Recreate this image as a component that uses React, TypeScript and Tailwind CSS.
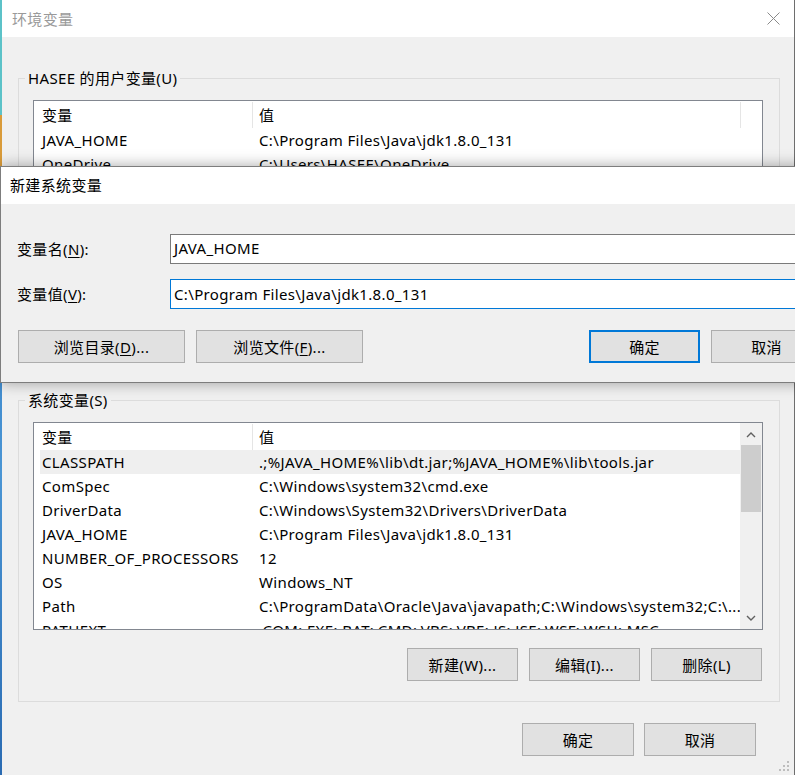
import React from "react";

type Row = [string, string];

const userRows: Row[] = [
  ["JAVA_HOME", "C:\\Program Files\\Java\\jdk1.8.0_131"],
  ["OneDrive", "C:\\Users\\HASEE\\OneDrive"],
  ["Path", "C:\\Users\\HASEE\\AppData\\Local\\Microsoft\\WindowsApps;"],
  ["TEMP", "%USERPROFILE%\\AppData\\Local\\Temp"],
  ["TMP", "%USERPROFILE%\\AppData\\Local\\Temp"],
];

const sysRows: Row[] = [
  ["CLASSPATH", ".;%JAVA_HOME%\\lib\\dt.jar;%JAVA_HOME%\\lib\\tools.jar"],
  ["ComSpec", "C:\\Windows\\system32\\cmd.exe"],
  ["DriverData", "C:\\Windows\\System32\\Drivers\\DriverData"],
  ["JAVA_HOME", "C:\\Program Files\\Java\\jdk1.8.0_131"],
  ["NUMBER_OF_PROCESSORS", "12"],
  ["OS", "Windows_NT"],
  ["Path", "C:\\ProgramData\\Oracle\\Java\\javapath;C:\\Windows\\system32;C:\\..."],
  ["PATHEXT", ".COM;.EXE;.BAT;.CMD;.VBS;.VBE;.JS;.JSE;.WSF;.WSH;.MSC"],
];

function Chevron({ down }: { down?: boolean }) {
  return (
    <svg width="10" height="6" viewBox="0 0 10 6" className="block">
      <path
        d={down ? "M1 1 L5 5 L9 1" : "M1 5 L5 1 L9 5"}
        fill="none"
        stroke="#606060"
        strokeWidth="1.4"
      />
    </svg>
  );
}

function Scrollbar() {
  return (
    <div className="w-[22px] shrink-0 bg-[#f0f0f0] flex flex-col">
      <div className="h-[22px] shrink-0 flex items-center justify-center pt-[2px]">
        <Chevron />
      </div>
      <div className="mx-[1px] h-[67px] shrink-0 bg-[#cdcdcd]" />
      <div className="flex-1" />
      <div className="h-[22px] shrink-0 flex items-center justify-center">
        <Chevron down />
      </div>
    </div>
  );
}

function ListBox({ rows, scroll, selected }: { rows: Row[]; scroll?: boolean; selected?: number }) {
  return (
    <div className="h-[208px] border border-[#828790] bg-white flex overflow-hidden">
      <div className="flex-1 min-w-0 flex flex-col pl-[6px] overflow-hidden">
        <div className="h-[27px] shrink-0 flex items-stretch">
          <div className="w-[212px] shrink-0 pl-[2px] flex items-center">变量</div>
          <div className="w-px shrink-0 mt-[1px] bg-[#e5e5e5]" />
          <div className="w-[487px] shrink-0 pl-[6px] flex items-center">值</div>
          {!scroll && <div className="w-px shrink-0 mt-[1px] bg-[#e5e5e5]" />}
        </div>
        {rows.map((r, i) => (
          <div
            key={i}
            className={
              "h-[24px] w-[700px] shrink-0 flex items-center whitespace-nowrap " +
              (i === selected ? "bg-[#efefef]" : "")
            }
          >
            <div className="w-[212px] shrink-0 pl-[2px] overflow-hidden">{r[0]}</div>
            <div className="w-[488px] shrink-0 pl-[7px] overflow-hidden">{r[1]}</div>
          </div>
        ))}
      </div>
      {scroll && <Scrollbar />}
    </div>
  );
}

function Btn({ children, className }: { children: React.ReactNode; className: string }) {
  return (
    <div
      className={
        "h-[33px] shrink-0 flex items-center justify-center bg-[#e1e1e1] text-black " + className
      }
    >
      {children}
    </div>
  );
}

export default function App() {
  return (
    <div className="relative w-[795px] h-[775px] overflow-hidden flex bg-[#f0f0f0] text-[15px] leading-[20px] tracking-[0.35px] text-black font-['Noto_Sans','Noto_Sans_CJK_SC',sans-serif]">
      {/* desktop strip */}
      <div className="w-[2px] shrink-0 flex flex-col">
        <div className="h-[115px] bg-[#5cc2c8]" />
        <div className="h-[55px] bg-[#d99b3a]" />
        <div className="flex-1 bg-gradient-to-b from-[#2f79c2] via-[#4a95d4] to-[#2a6bb2]" />
      </div>

      {/* main window */}
      <div className="relative flex-1 flex flex-col border-r border-[#6e6e6e]">
        <div className="h-[37px] shrink-0 bg-white flex items-center justify-between pl-[10px] pr-[14px]">
          <span className="text-[#9a9a9a]">环境变量</span>
          <svg width="13" height="13" viewBox="0 0 13 13">
            <path d="M0.5 0.5 L12.5 12.5 M12.5 0.5 L0.5 12.5" stroke="#8a8a8a" strokeWidth="1" />
          </svg>
        </div>

        <div className="flex-1 flex flex-col pl-[16px] pr-[14px]">
          <fieldset className="mt-[31px] border border-[#dcdcdc]">
            <legend className="ml-[6px] px-[3px] leading-[20px]">HASEE 的用户变量(U)</legend>
            <div className="pl-[14px] pr-[16px] pt-[12px] pb-[19px]">
              <ListBox rows={userRows} />
              <div className="flex justify-end gap-[11px] mt-[19px] pr-[1px]">
                <Btn className="w-[111px] border border-[#adadad]">新建(N)...</Btn>
                <Btn className="w-[111px] border border-[#adadad]">编辑(E)...</Btn>
                <Btn className="w-[111px] border border-[#adadad]">删除(D)</Btn>
              </div>
            </div>
          </fieldset>

          <fieldset className="mt-[10px] border border-[#dcdcdc]">
            <legend className="ml-[6px] px-[3px] leading-[20px]">系统变量(S)</legend>
            <div className="pl-[14px] pr-[16px] pt-[12px] pb-[20px]">
              <ListBox rows={sysRows} scroll selected={0} />
              <div className="flex justify-end gap-[11px] mt-[18px] pr-[1px]">
                <Btn className="w-[111px] border border-[#adadad]">新建(W)...</Btn>
                <Btn className="w-[111px] border border-[#adadad]">编辑(I)...</Btn>
                <Btn className="w-[111px] border border-[#adadad]">删除(L)</Btn>
              </div>
            </div>
          </fieldset>

          <div className="flex justify-end gap-[10px] mt-[21px] pr-[24px]">
            <Btn className="w-[112px] border border-[#adadad]">确定</Btn>
            <Btn className="w-[112px] border border-[#adadad]">取消</Btn>
          </div>
        </div>

        {/* resize grip */}
        <svg className="absolute right-[3px] bottom-[2px]" width="12" height="12" viewBox="0 0 12 12">
          <rect x="8" y="0" width="2" height="2" fill="#bdbdbd" />
          <rect x="4" y="4" width="2" height="2" fill="#bdbdbd" />
          <rect x="8" y="4" width="2" height="2" fill="#bdbdbd" />
          <rect x="0" y="8" width="2" height="2" fill="#bdbdbd" />
          <rect x="4" y="8" width="2" height="2" fill="#bdbdbd" />
          <rect x="8" y="8" width="2" height="2" fill="#bdbdbd" />
        </svg>
      </div>

      {/* overlay dialog: 新建系统变量 */}
      <div className="absolute left-0 top-[166px] w-[840px] h-[217px] border border-[#7d7d7d] bg-[#f0f0f0] shadow-[0_0_14px_rgba(0,0,0,0.35)] flex flex-col">
        <div className="h-[37px] shrink-0 bg-white flex items-center pl-[9px] pb-[1px]">新建系统变量</div>
        <div className="flex-1 flex flex-col pl-[16px] pt-[30px]">
          <div className="flex items-center h-[30px]">
            <div className="w-[153px] shrink-0">
              变量名(<span className="underline underline-offset-2">N</span>):
            </div>
            <div className="flex-1 h-[30px] border border-[#7a7a7a] bg-white pl-[3px] pb-[2px] flex items-center">
              JAVA_HOME
            </div>
          </div>
          <div className="flex items-center h-[30px] mt-[15px]">
            <div className="w-[153px] shrink-0">
              变量值(<span className="underline underline-offset-2">V</span>):
            </div>
            <div className="flex-1 h-[30px] border border-[#0078d7] bg-white pl-[3px] pb-[1px] flex items-center">
              C:\Program Files\Java\jdk1.8.0_131
            </div>
          </div>
          <div className="flex mt-[21px] pl-[1px]">
            <Btn className="w-[167px] border border-[#adadad]">
              浏览目录(<span className="underline underline-offset-2">D</span>)...
            </Btn>
            <Btn className="w-[167px] ml-[11px] border border-[#adadad]">
              浏览文件(<span className="underline underline-offset-2">F</span>)...
            </Btn>
            <Btn className="w-[111px] ml-[226px] border-2 border-[#0078d7]">确定</Btn>
            <Btn className="w-[111px] ml-[11px] border border-[#adadad]">取消</Btn>
          </div>
        </div>
      </div>
    </div>
  );
}
